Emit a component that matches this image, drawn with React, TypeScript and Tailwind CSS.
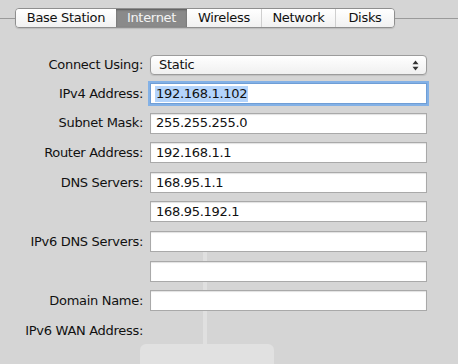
const TABS = ["Base Station", "Internet", "Wireless", "Network", "Disks"];
const TAB_W = ["w-[100px]", "w-[71px]", "w-[74px]", "w-[74px]", "w-[59px]"];

type Row = { label: string; value: string };

const ROWS: Row[] = [
  { label: "Subnet Mask:", value: "255.255.255.0" },
  { label: "Router Address:", value: "192.168.1.1" },
  { label: "DNS Servers:", value: "168.95.1.1" },
  { label: "", value: "168.95.192.1" },
  { label: "IPv6 DNS Servers:", value: "" },
  { label: "", value: "" },
  { label: "Domain Name:", value: "" },
];

function Label({ children }: { children: React.ReactNode }) {
  return <div className="w-[143px] shrink-0 text-right text-[#111]">{children}</div>;
}

export default function App() {
  return (
    <div
      className="relative h-[364px] w-[458px] overflow-hidden bg-[#d5d5d5] text-[13px] tracking-[-0.3px] text-[#111]"
      style={{ fontFamily: '"DejaVu Sans", "Lucida Grande", sans-serif' }}
    >
      {/* faint base station artwork behind the form */}
      <div className="absolute left-[203px] top-[236px] h-[108px] w-[4px] bg-[#e0e0e0]" />
      <div className="absolute left-[140px] top-[344px] h-[30px] w-[134px] rounded-t-[6px] bg-[#e1e1e1]" />

      {/* tab bar */}
      <div className="relative flex items-center pt-[8px]">
        <div className="h-px w-[15px] bg-[#9a9a9a]" />
        <div className="flex h-[20px] overflow-hidden rounded-[4px] border border-[#8f8f8f] shadow-[0_1px_1px_rgba(0,0,0,0.12)]">
          {TABS.map((t, i) => (
            <div
              key={t}
              className={
                i === 1
                  ? `${TAB_W[i]} flex items-center justify-center bg-[#8a8a8a] text-[#f4f4f4] shadow-[inset_0_1px_2px_rgba(0,0,0,0.35)]`
                  : `${TAB_W[i]} flex items-center justify-center bg-gradient-to-b from-white to-[#f1f1f1] ${
                      i > 2 ? "border-l border-[#cfcfcf]" : ""
                    }`
              }
            >
              {t}
            </div>
          ))}
        </div>
        <div className="h-px flex-1 bg-[#9a9a9a]" />
      </div>

      {/* form */}
      <div className="relative mt-[27px] flex flex-col">
        <div className="flex h-[20px] items-center gap-[7px]">
          <Label>Connect Using:</Label>
          <div className="flex h-[20px] w-[277px] items-center justify-between rounded-[4px] border border-[#9c9c9c] bg-gradient-to-b from-white to-[#f0f0f0] pl-[8px] pr-[7px] shadow-[0_1px_1px_rgba(0,0,0,0.1)]">
            <span>Static</span>
            <svg width="7" height="11" viewBox="0 0 7 11">
              <path d="M3.5 0.5 L6.5 4.2 H0.5 Z" fill="#333" />
              <path d="M3.5 10.5 L6.5 6.8 H0.5 Z" fill="#333" />
            </svg>
          </div>
        </div>

        <div className="mt-[8px] flex h-[21px] items-center gap-[7px]">
          <Label>IPv4 Address:</Label>
          <div className="flex h-[21px] w-[277px] items-center border border-[#6f9ed6] bg-white pl-[4px] shadow-[0_0_0_2px_#83b1e6]">
            <span className="bg-[#b4d4fb] px-[1px] leading-[16px]">192.168.1.102</span>
          </div>
        </div>

        <div className="mt-[8.6px] flex flex-col gap-[8.6px]">
          {ROWS.map((r, i) => (
            <div key={i} className="flex h-[21px] items-center gap-[7px]">
              <Label>{r.label}</Label>
              <div className="flex h-[21px] w-[277px] items-center border border-[#a9a9a9] bg-white pl-[5px] shadow-[inset_0_1px_1px_rgba(0,0,0,0.12)]">
                {r.value}
              </div>
            </div>
          ))}
          <div className="flex h-[21px] items-center gap-[7px]">
            <Label>IPv6 WAN Address:</Label>
          </div>
        </div>
      </div>
    </div>
  );
}
